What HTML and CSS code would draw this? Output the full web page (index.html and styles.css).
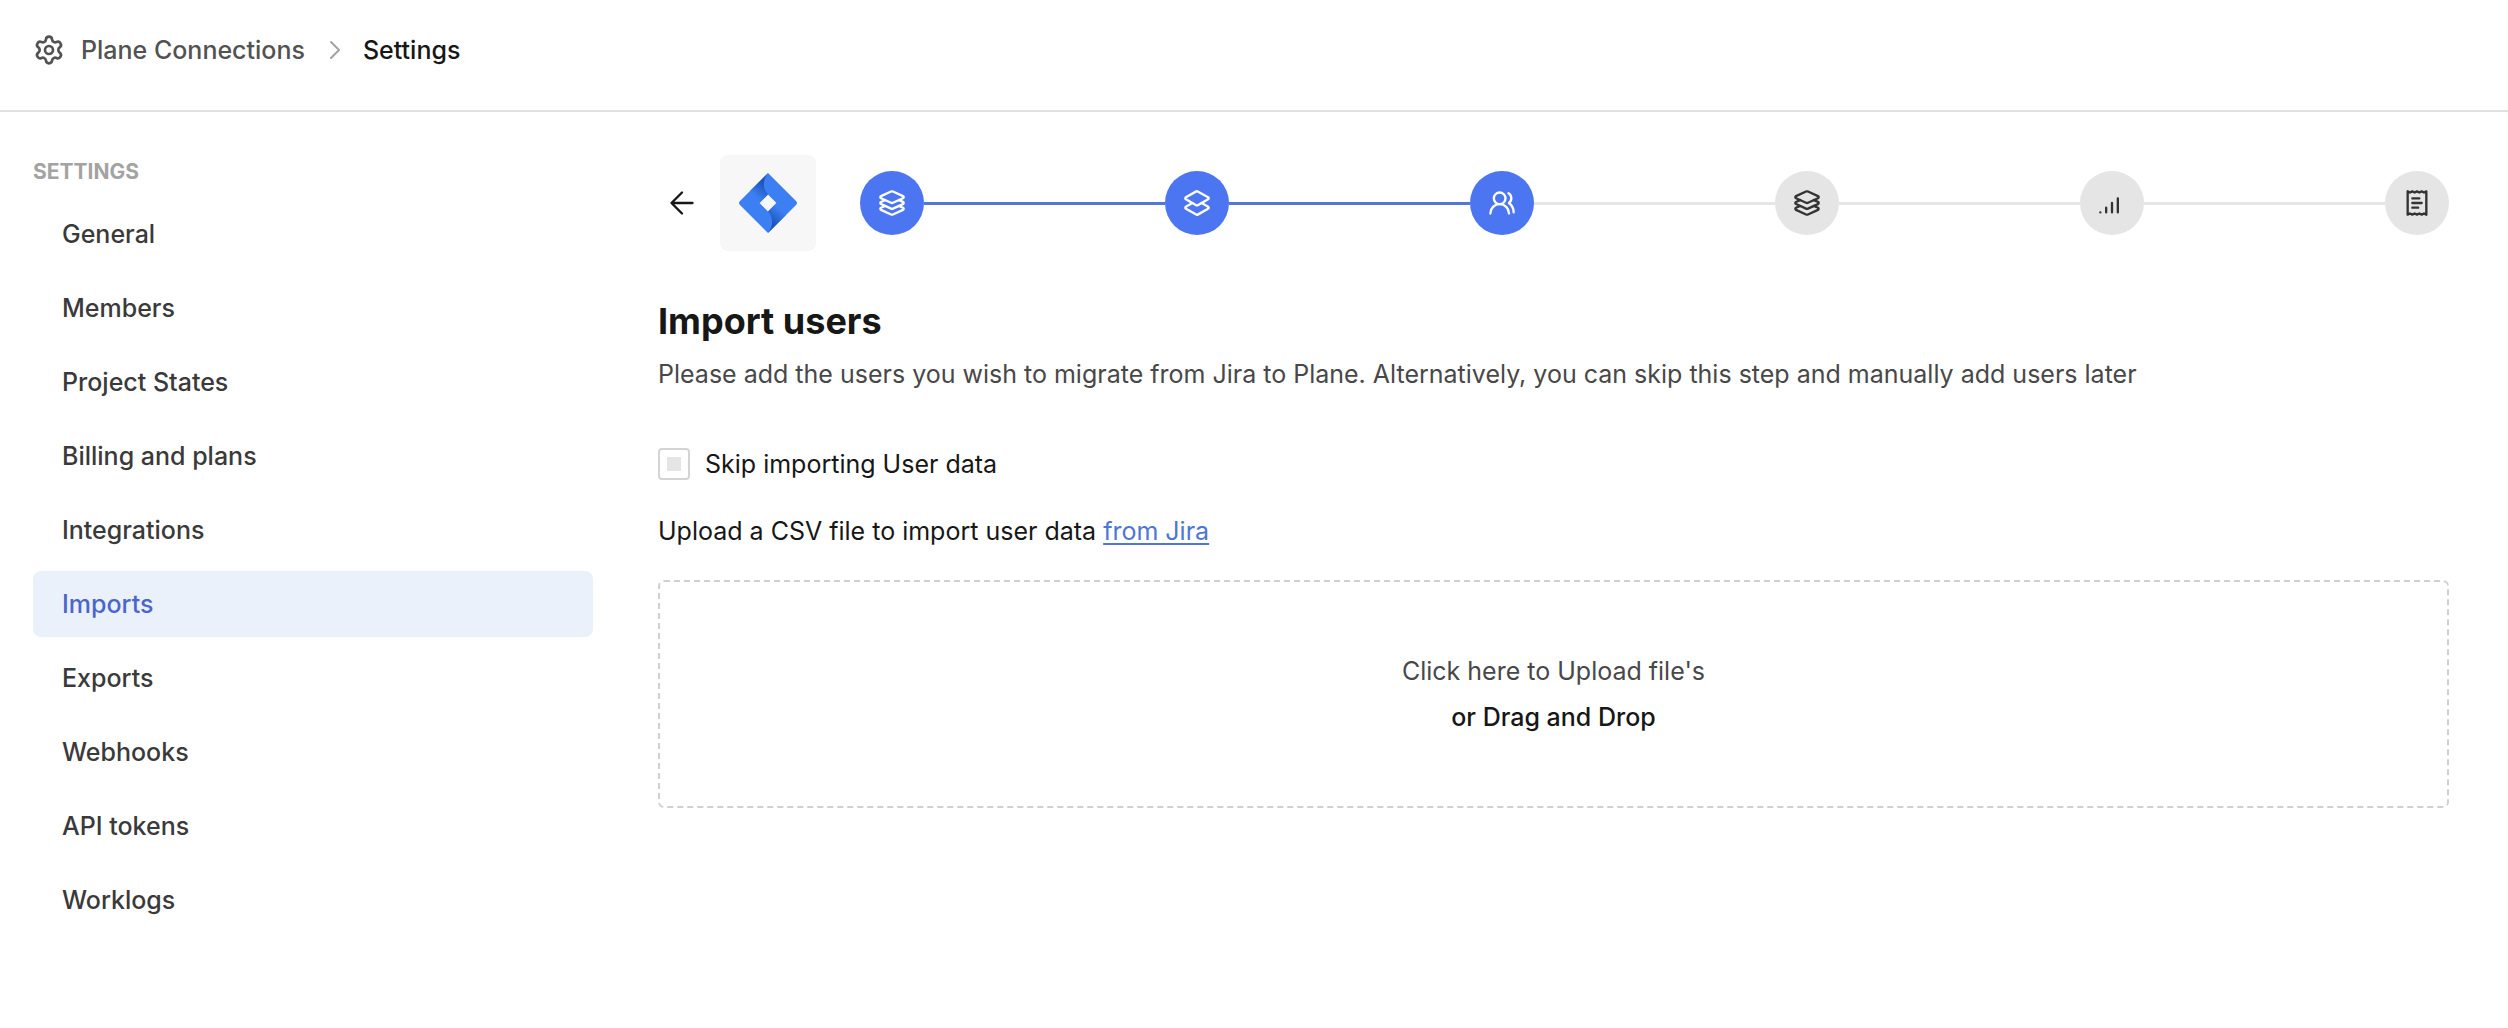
FILE: index.html
```html
<!DOCTYPE html>
<html lang="en">
<head>
<meta charset="utf-8">
<meta name="viewport" content="width=device-width, initial-scale=1">
<title>Plane Connections - Settings</title>
<link rel="stylesheet" href="styles.css">
</head>
<body>
<svg class="sprite" aria-hidden="true">
  <symbol id="icon-layers-3" viewBox="0 0 24 24">
    <path d="m12.83 2.18a2 2 0 0 0-1.66 0L2.6 6.08a1 1 0 0 0 0 1.83l8.58 3.91a2 2 0 0 0 1.66 0l8.58-3.9a1 1 0 0 0 0-1.83Z"/>
    <path d="m6.08 9.5-3.5 1.6a1 1 0 0 0 0 1.81l8.6 3.91a2 2 0 0 0 1.65 0l8.58-3.9a1 1 0 0 0 0-1.83l-3.5-1.59"/>
    <path d="m6.08 14.5-3.5 1.6a1 1 0 0 0 0 1.81l8.6 3.91a2 2 0 0 0 1.65 0l8.58-3.9a1 1 0 0 0 0-1.83l-3.5-1.59"/>
  </symbol>
</svg>

<header class="topbar">
  <nav class="breadcrumb" aria-label="Breadcrumb">
    <a class="crumb" href="#">
      <svg class="crumb-icon" viewBox="0 0 24 24" aria-hidden="true"><path d="M9.671 4.136a2.34 2.34 0 0 1 4.659 0 2.34 2.34 0 0 0 3.319 1.915 2.34 2.34 0 0 1 2.33 4.033 2.34 2.34 0 0 0 0 3.831 2.34 2.34 0 0 1-2.33 4.033 2.34 2.34 0 0 0-3.319 1.915 2.34 2.34 0 0 1-4.659 0 2.34 2.34 0 0 0-3.32-1.915 2.34 2.34 0 0 1-2.33-4.033 2.34 2.34 0 0 0 0-3.831A2.34 2.34 0 0 1 6.35 6.051a2.34 2.34 0 0 0 3.319-1.915"/><circle cx="12" cy="12" r="3"/></svg>
      Plane Connections
    </a>
    <svg class="crumb-separator" viewBox="0 0 24 24" aria-hidden="true"><path d="m9 4 8 8-8 8"/></svg>
    <span class="crumb-current" aria-current="page">Settings</span>
  </nav>
</header>

<div class="layout">
  <aside class="sidebar">
    <h2 class="sidebar-title">SETTINGS</h2>
    <nav class="menu" aria-label="Settings">
      <a class="menu-item" href="#">General</a>
      <a class="menu-item" href="#">Members</a>
      <a class="menu-item" href="#">Project States</a>
      <a class="menu-item" href="#">Billing and plans</a>
      <a class="menu-item" href="#">Integrations</a>
      <a class="menu-item menu-item-active" href="#" aria-current="page">Imports</a>
      <a class="menu-item" href="#">Exports</a>
      <a class="menu-item" href="#">Webhooks</a>
      <a class="menu-item" href="#">API tokens</a>
      <a class="menu-item" href="#">Worklogs</a>
    </nav>
  </aside>

  <main class="content">
    <div class="wizard">
      <button class="back" type="button" aria-label="Back">
        <svg viewBox="0 0 24 24" aria-hidden="true"><path d="m12 3-9 9 9 9M21 12H3"/></svg>
      </button>
      <div class="source">
        <svg viewBox="0 0 58 60" role="img" aria-label="Jira">
          <defs>
            <linearGradient id="jira-top" gradientUnits="userSpaceOnUse" x1="27" y1="8" x2="15" y2="22"><stop offset="0.15" stop-color="#1d54b8"/><stop offset="1" stop-color="#3c7ff2"/></linearGradient>
            <linearGradient id="jira-bottom" gradientUnits="userSpaceOnUse" x1="31" y1="52" x2="43" y2="38"><stop offset="0.15" stop-color="#1d54b8"/><stop offset="1" stop-color="#3c7ff2"/></linearGradient>
          </defs>
          <path fill="#3c7ff2" fill-rule="evenodd" d="M29 0 57 28q2 2 0 4L29 60 1 32q-2-2 0-4ZM29 21.5 20.5 30l8.5 8.5 8.5-8.5Z"/>
          <path fill="url(#jira-top)" d="M29 0c-5 6-6 15 0 21.5L20.5 30 11 18Z"/>
          <path fill="url(#jira-bottom)" d="M29 60c5-6 6-15 0-21.5L37.5 30 47 42Z"/>
        </svg>
      </div>
      <ol class="steps">
        <li class="step step-done"><span class="step-dot"><svg class="step-icon" aria-hidden="true"><use href="#icon-layers-3"/></svg></span></li>
        <li class="step step-done"><span class="step-dot"><svg class="step-icon" viewBox="0 0 24 24" aria-hidden="true"><path d="m16.02 12 5.48 3.13a1 1 0 0 1 0 1.74L13 21.74a2 2 0 0 1-2 0l-8.5-4.87a1 1 0 0 1 0-1.74L7.98 12"/><path d="M13 13.74a2 2 0 0 1-2 0L2.5 8.87a1 1 0 0 1 0-1.74L11 2.26a2 2 0 0 1 2 0l8.5 4.87a1 1 0 0 1 0 1.74Z"/></svg></span></li>
        <li class="step step-current" aria-current="step"><span class="step-dot"><svg class="step-icon" viewBox="0 0 24 24" aria-hidden="true"><path d="M18 21a8 8 0 0 0-16 0"/><circle cx="10" cy="8" r="5"/><path d="M22 20c0-3.37-2-6.5-4-8a5 5 0 0 0-.45-8.3"/></svg></span></li>
        <li class="step"><span class="step-dot"><svg class="step-icon" aria-hidden="true"><use href="#icon-layers-3"/></svg></span></li>
        <li class="step"><span class="step-dot"><svg class="step-icon" viewBox="0 0 24 24" aria-hidden="true"><path d="M2 20h.01M7 20v-4M12 20v-8M17 20V8"/></svg></span></li>
        <li class="step"><span class="step-dot"><svg class="step-icon" viewBox="0 0 24 24" aria-hidden="true"><path d="M4 2v20l2-1 2 1 2-1 2 1 2-1 2 1 2-1 2 1V2l-2 1-2-1-2 1-2-1-2 1-2-1-2 1Z"/><path d="M14 8H8M16 12H8M13 16H8"/></svg></span></li>
      </ol>
    </div>

    <h1 class="title">Import users</h1>
    <p class="lead">Please add the users you wish to migrate from Jira to Plane. Alternatively, you can skip this step and manually add users later</p>

    <label class="skip"><input class="skip-box" type="checkbox">Skip importing User data</label>

    <p class="hint">Upload a CSV file to import user data <a class="hint-link" href="#">from Jira</a></p>

    <button class="dropzone" type="button">
      <span class="dropzone-text">Click here to Upload file's</span>
      <span class="dropzone-strong">or Drag and Drop</span>
    </button>
  </main>
</div>
</body>
</html>
```

FILE: styles.css
```css
* { box-sizing: border-box; }

body {
  margin: 0;
  background: #fff;
  color: #171717;
  font: 400 25px/36px Inter, "Liberation Sans", sans-serif;
}

svg {
  fill: none;
  stroke: currentColor;
  stroke-width: 2;
  stroke-linecap: round;
  stroke-linejoin: round;
}

.sprite { display: none; }

/* Top bar */

.topbar {
  padding: 32px 33px 42px;
  border-bottom: 2px solid #e0e0e0;
}

.breadcrumb,
.crumb {
  display: flex;
  align-items: center;
  font-weight: 500;
}

.crumb { gap: 16px; color: #525252; text-decoration: none; }
.crumb-icon { width: 32px; height: 32px; }
.crumb-separator { width: 24px; height: 24px; margin: 0 17px; color: #a3a3a3; }
.crumb-current { color: #171717; }

.layout {
  display: grid;
  grid-template-columns: 560px 1fr;
  gap: 65px;
  padding: 43px 59px 64px 33px;
}

/* Sidebar */

.sidebar-title {
  margin: 0 0 12px;
  color: #a3a3a3;
  font-size: 21px;
  line-height: 34px;
  font-weight: 700;
}

.menu { display: flex; flex-direction: column; gap: 8px; }

.menu-item {
  padding: 15px 29px;
  border-radius: 8px;
  color: #3a3a3a;
  font-weight: 500;
  text-decoration: none;
}

.menu-item-active { background: #ebf1fb; color: #4a66cc; }

/* Import wizard */

.wizard { display: flex; align-items: center; }

.back {
  display: flex;
  padding: 10px;
  border: 0;
  background: none;
  color: #171717;
  cursor: pointer;
}

.back svg { width: 28px; height: 28px; }

.source {
  display: flex;
  margin: 0 44px 0 14px;
  padding: 18px;
  border-radius: 8px;
  background: #f7f7f7;
}

.source svg { width: 60px; height: 60px; stroke: none; }

.steps {
  display: flex;
  flex: 1;
  margin: 0;
  padding: 0;
  list-style: none;
}

.step {
  display: flex;
  flex: 1;
  align-items: center;
}

.step:last-child { flex: none; }

.step:not(:last-child)::after {
  content: "";
  flex: 1;
  height: 3px;
  background: #e5e5e5;
}

.step.step-done::after { background: #5078d8; }

.step-dot {
  display: flex;
  padding: 18px;
  border-radius: 50%;
  background: #e5e5e5;
  color: #333;
}

.step-done .step-dot,
.step-current .step-dot { background: #4c75f2; color: #fff; }

.step-icon { width: 28px; height: 28px; }

.title {
  margin: 48px 0 13px;
  font-size: 36px;
  line-height: 44px;
  font-weight: 700;
}

.lead { margin: 0 0 54px; color: #484848; }

.skip {
  display: flex;
  align-items: center;
  gap: 15px;
}

.skip-box {
  display: grid;
  place-items: center;
  width: 32px;
  height: 32px;
  margin: 0;
  border: 2px solid #d4d4d4;
  border-radius: 4px;
  appearance: none;
}

.skip-box::before {
  content: "";
  width: 14px;
  height: 14px;
  background: #e5e5e5;
}

.skip-box:checked::before { background: #4c75f2; }

.hint { margin: 31px 0; }
.hint-link { color: #4f75d6; text-underline-offset: 3px; text-decoration-thickness: 2px; }

.dropzone {
  display: flex;
  flex-direction: column;
  align-items: center;
  gap: 10px;
  width: 100%;
  padding: 71px 24px;
  border: 2px dashed #d0d0d0;
  border-radius: 6px;
  background: none;
  color: #171717;
  font: inherit;
  cursor: pointer;
}

.dropzone-text { color: #484848; }
.dropzone-strong { font-weight: 500; }
```
